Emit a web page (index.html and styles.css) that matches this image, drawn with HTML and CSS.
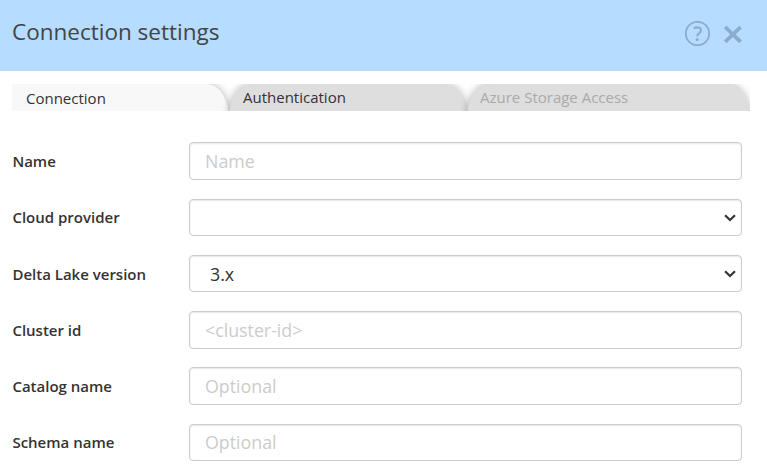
FILE: index.html
```html
<!DOCTYPE html>
<html lang="en">
<head>
<meta charset="utf-8">
<title>Connection settings</title>
<link rel="stylesheet" href="styles.css">
</head>
<body>
<header class="header">
  <h1 class="title">Connection settings</h1>
  <svg class="help" width="26" height="26" viewBox="0 0 26 26" role="img" aria-label="Help">
    <circle cx="13.5" cy="12.5" r="11.7" fill="none" stroke="currentColor" stroke-width="1.8"/>
    <path d="M9.6 7.3C12.6 5.6 17 6.2 17 9.2C17 12.2 13.2 12 13.2 15.4" fill="none" stroke="currentColor" stroke-width="2.1"/>
    <circle cx="13.2" cy="18.5" r="1.5" fill="currentColor"/>
  </svg>
  <svg class="close" width="20" height="20" viewBox="0 0 20 20" role="img" aria-label="Close">
    <path d="M2.2 2L17.6 16.8M17.6 2L2.2 16.8" fill="none" stroke="currentColor" stroke-width="3.8"/>
  </svg>
</header>
<nav class="tabs">
  <div class="tab tab-active">Connection</div>
  <div class="tab tab-auth">Authentication</div>
  <div class="tab tab-disabled">Azure Storage Access</div>
</nav>
<form class="form">
  <label class="label" for="name">Name</label>
  <input class="field" id="name" placeholder="Name">
  <label class="label" for="cloud">Cloud provider</label>
  <div class="select-wrap">
    <select class="field select" id="cloud"><option></option></select>
    <svg class="chevron" width="12" height="8" viewBox="0 0 12 8"><path d="M1 1.2L6 6L11 1.2" fill="none" stroke="currentColor" stroke-width="2.1"/></svg>
  </div>
  <label class="label" for="version">Delta Lake version</label>
  <div class="select-wrap">
    <select class="field select" id="version"><option>3.x</option></select>
    <svg class="chevron" width="12" height="8" viewBox="0 0 12 8"><path d="M1 1.2L6 6L11 1.2" fill="none" stroke="currentColor" stroke-width="2.1"/></svg>
  </div>
  <label class="label" for="cluster">Cluster id</label>
  <input class="field" id="cluster" placeholder="&lt;cluster-id&gt;">
  <label class="label" for="catalog">Catalog name</label>
  <input class="field" id="catalog" placeholder="Optional">
  <label class="label" for="schema">Schema name</label>
  <input class="field field-last" id="schema" placeholder="Optional">
</form>
</body>
</html>
```

FILE: styles.css
```css
* { box-sizing: border-box; }
body {
  margin: 0;
  height: 471px;
  overflow: hidden;
  background: #fff;
  color: #333;
  font-family: "Open Sans", sans-serif;
}
.header {
  display: flex;
  align-items: center;
  height: 71px;
  padding: 0 24px 4px 12px;
  background: #b6dcff;
}
.title {
  flex: 1;
  margin: -4px 0 0;
  color: #444;
  font-size: 22.5px;
  font-weight: 400;
  line-height: 32px;
}
.help, .close { color: #8baccb; }
.help { margin-right: 13px; }
.close { margin-top: 3px; }
.tabs {
  display: flex;
  height: 27px;
  margin: 13px 17px 0 12px;
  overflow: hidden;
  font-size: 15px;
  line-height: 27px;
}
.tab {
  flex: none;
  height: 34px;
  padding-left: 14px;
  background: #dedede;
  border-radius: 22px 22px 0 0 / 34px 34px 0 0;
  box-shadow: 0 0 8px rgba(0, 0, 0, 0.3);
}
.tab-active {
  width: 217px;
  padding-top: 1px;
  background: #f8f8f8;
  border-radius: 0 22px 0 0 / 0 34px 0 0;
}
.tab-auth { width: 238px; }
.tab-disabled {
  width: 283px;
  padding-left: 13px;
  color: #aaa;
}
.form {
  display: grid;
  grid-template-columns: 177px 553px;
  grid-auto-rows: 38px;
  row-gap: 18.3px;
  align-items: center;
  padding: 31px 0 0 12px;
}
.label {
  padding-left: 0.4px;
  font-size: 15px;
  font-weight: 600;
  line-height: 20px;
}
.field {
  display: block;
  width: 100%;
  height: 38px;
  margin: 0;
  padding: 0 15px;
  border: 1px solid #ccc;
  border-radius: 4px;
  outline: none;
  background: #fff;
  box-shadow: inset 0 1px 2px rgba(0, 0, 0, 0.1);
  color: #333;
  font: 17.8px "Open Sans", sans-serif;
}
.field::placeholder { color: #ccc; opacity: 1; }
.field-last { height: 37px; }
.select-wrap { position: relative; }
.select {
  height: 37px;
  padding-left: 20px;
  appearance: none;
}
.chevron {
  position: absolute;
  right: 6px;
  top: 15px;
}
```
